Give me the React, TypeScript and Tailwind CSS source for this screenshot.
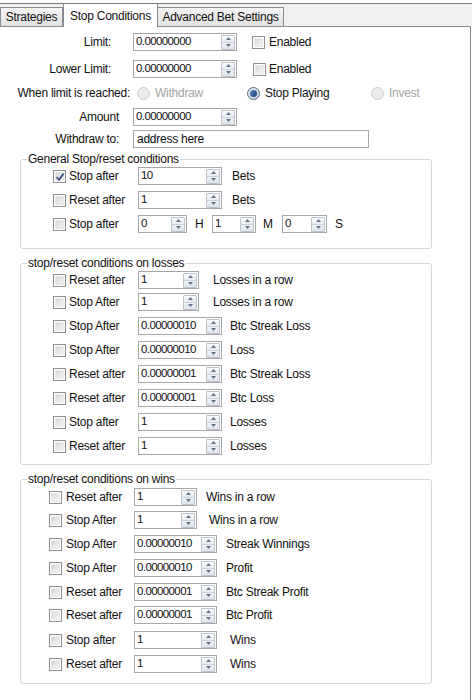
import React from "react";

const Spin = () => (
  <div className="flex flex-col w-[14px] h-[15px] border border-[#bcc3cb] rounded-[1px] ml-auto">
    <div className="flex-1 flex items-center justify-center bg-linear-to-b from-[#fbfcfd] to-[#e6ebf0] border-b border-[#cbd2d9]">
      <svg width="5" height="3" viewBox="0 0 5 3">
        <path d="M2.5 0 L5 3 L0 3 Z" fill="#63738b" />
      </svg>
    </div>
    <div className="flex-1 flex items-center justify-center bg-linear-to-b from-[#eef1f5] to-[#dfe5eb]">
      <svg width="5" height="3" viewBox="0 0 5 3">
        <path d="M0 0 L5 0 L2.5 3 Z" fill="#63738b" />
      </svg>
    </div>
  </div>
);

const NumBox: React.FC<{ value: string; className?: string }> = ({ value, className }) => (
  <div className={`flex items-center h-[18px] border border-[#a7a7a7] bg-white pl-[2px] pr-[1px] ${className ?? ""}`}>
    <span className="leading-none text-[11.5px] tracking-[-0.6px]">{value}</span>
    <Spin />
  </div>
);

const Check: React.FC<{ checked?: boolean; className?: string }> = ({ checked, className }) => (
  <div className={`relative w-[13px] h-[13px] shrink-0 border border-[#8e8f8f] bg-white p-[1px] ${className ?? ""}`}>
    <div className="w-full h-full bg-linear-to-br from-[#d8d8d8] to-[#f6f6f6] border border-[#e8e8e8]" />
    {checked && (
      <svg className="absolute left-[1px] top-[1px]" width="10" height="10" viewBox="0 0 10 10">
        <path d="M1.5 5 L4 7.8 L8.6 1.6" stroke="#3c4f86" strokeWidth="1.8" fill="none" />
      </svg>
    )}
  </div>
);

const Radio: React.FC<{ on?: boolean }> = ({ on }) => (
  <div
    className={`w-[13px] h-[13px] shrink-0 rounded-full border flex items-center justify-center ${
      on ? "border-[#5a6a83] bg-linear-to-br from-[#e9eef5] to-[#c7d2e0]" : "border-[#cccccc] bg-[#ececec]"
    }`}
  >
    {on && <div className="w-[7px] h-[7px] rounded-full bg-linear-to-br from-[#5d8bc9] to-[#1a3d73]" />}
  </div>
);

const Line: React.FC<{ className?: string; children: React.ReactNode }> = ({ className, children }) => (
  <div className={`flex items-center h-[20px] ${className ?? ""}`}>{children}</div>
);

const Group: React.FC<{ title: string; className?: string; children: React.ReactNode }> = ({
  title,
  className,
  children,
}) => (
  <fieldset className={`ml-[20px] w-[412px] border border-[#d3d9de] rounded-[3px] ${className ?? ""}`}>
    <legend className="ml-[6px] px-[1px] leading-[14px]">{title}</legend>
    {children}
  </fieldset>
);

export default function App() {
  return (
    <div className="w-[472px] h-[700px] bg-white text-[#111] text-[12px] tracking-[-0.25px] font-['Liberation_Sans',Arial,sans-serif] leading-[14px]">
      {/* tab strip */}
      <div className="pt-[3px]">
        <div className="flex items-end h-[23px] bg-[#f0f0f0] border-t border-[#7b7b7b]">
          <div className="h-[19px] w-[63px] flex items-center justify-center border border-b-0 border-[#898c95] bg-linear-to-b from-[#f4f4f4] to-[#e2e2e2]">
            Strategies
          </div>
          <div className="h-[23px] w-[95px] flex items-center justify-center border border-b-0 border-t-0 border-[#898c95] bg-white -mb-px relative">
            Stop Conditions
          </div>
          <div className="h-[19px] w-[126px] flex items-center justify-center border border-b-0 border-l-0 border-[#898c95] bg-linear-to-b from-[#f4f4f4] to-[#e2e2e2]">
            Advanced Bet Settings
          </div>
        </div>
      </div>

      {/* tab page */}
      <div className="w-[471px] h-[674px] border-t border-r border-[#898c95]">
        <Line className="mt-[5px]">
          <span className="w-[111px] text-right">Limit:</span>
          <NumBox className="ml-[22px] w-[104px]" value="0.00000000" />
          <Check className="ml-[15px]" />
          <span className="ml-[4px]">Enabled</span>
        </Line>
        <Line className="mt-[7px]">
          <span className="w-[111px] text-right">Lower Limit:</span>
          <NumBox className="ml-[22px] w-[104px]" value="0.00000000" />
          <Check className="ml-[16px]" />
          <span className="ml-[3px]">Enabled</span>
        </Line>
        <Line className="mt-[4px]">
          <span className="w-[130px] text-right">When limit is reached:</span>
          <div className="ml-[7px] w-[110px] flex items-center gap-[5px] text-[#a3a3a3]">
            <Radio />
            <span>Withdraw</span>
          </div>
          <div className="w-[124px] flex items-center gap-[5px]">
            <Radio on />
            <span>Stop Playing</span>
          </div>
          <div className="flex items-center gap-[5px] text-[#a3a3a3]">
            <Radio />
            <span>Invest</span>
          </div>
        </Line>
        <Line className="mt-[4px]">
          <span className="w-[119px] text-right">Amount</span>
          <NumBox className="ml-[14px] w-[104px]" value="0.00000000" />
        </Line>
        <Line className="mt-[2px]">
          <span className="w-[119px] text-right">Withdraw to:</span>
          <div className="ml-[14px] w-[236px] h-[18px] flex items-center border border-[#a7a7a7] pl-[3px]">
            address here
          </div>
        </Line>

        <Group title="General Stop/reset conditions" className="mt-[3px]">
          <div className="pl-[32px] pb-[14px]">
            <Line>
              <Check checked />
              <span className="ml-[3px] w-[69px]">Stop after</span>
              <NumBox className="w-[84px]" value="10" />
              <span className="ml-[10px]">Bets</span>
            </Line>
            <Line className="mt-[4px]">
              <Check />
              <span className="ml-[3px] w-[69px]">Reset after</span>
              <NumBox className="w-[84px]" value="1" />
              <span className="ml-[10px]">Bets</span>
            </Line>
            <Line className="mt-[4px]">
              <Check />
              <span className="ml-[3px] w-[69px]">Stop after</span>
              <NumBox className="w-[49px]" value="0" />
              <span className="ml-[8px] w-[9px]">H</span>
              <NumBox className="ml-[8px] w-[44px]" value="1" />
              <span className="ml-[7px] w-[12px]">M</span>
              <NumBox className="ml-[7px] w-[45px]" value="0" />
              <span className="ml-[8px]">S</span>
            </Line>
          </div>
        </Group>

        <Group title="stop/reset conditions on losses" className="mt-[7px]">
          <div className="pl-[32px] pb-[8px]">
            <Line>
              <Check />
              <span className="ml-[3px] w-[69px]">Reset after</span>
              <NumBox className="w-[61px]" value="1" />
              <span className="ml-[14px]">Losses in a row</span>
            </Line>
            <Line className="mt-[2px]">
              <Check />
              <span className="ml-[3px] w-[69px]">Stop After</span>
              <NumBox className="w-[61px]" value="1" />
              <span className="ml-[14px]">Losses in a row</span>
            </Line>
            <Line className="mt-[4px]">
              <Check />
              <span className="ml-[3px] w-[69px]">Stop After</span>
              <NumBox className="w-[84px]" value="0.00000010" />
              <span className="ml-[8px]">Btc Streak Loss</span>
            </Line>
            <Line className="mt-[4px]">
              <Check />
              <span className="ml-[3px] w-[69px]">Stop After</span>
              <NumBox className="w-[84px]" value="0.00000010" />
              <span className="ml-[8px]">Loss</span>
            </Line>
            <Line className="mt-[4px]">
              <Check />
              <span className="ml-[3px] w-[69px]">Reset after</span>
              <NumBox className="w-[84px]" value="0.00000001" />
              <span className="ml-[8px]">Btc Streak Loss</span>
            </Line>
            <Line className="mt-[4px]">
              <Check />
              <span className="ml-[3px] w-[69px]">Reset after</span>
              <NumBox className="w-[84px]" value="0.00000001" />
              <span className="ml-[8px]">Btc Loss</span>
            </Line>
            <Line className="mt-[4px]">
              <Check />
              <span className="ml-[3px] w-[69px]">Stop after</span>
              <NumBox className="w-[84px]" value="1" />
              <span className="ml-[8px]">Losses</span>
            </Line>
            <Line className="mt-[4px]">
              <Check />
              <span className="ml-[3px] w-[69px]">Reset after</span>
              <NumBox className="w-[84px]" value="1" />
              <span className="ml-[8px]">Losses</span>
            </Line>
          </div>
        </Group>

        <Group title="stop/reset conditions on wins" className="mt-[7px]">
          <div className="pl-[28px] pb-[9px]">
            <Line className="mt-[1px]">
              <Check />
              <span className="ml-[4px] w-[68px]">Reset after</span>
              <NumBox className="w-[63px]" value="1" />
              <span className="ml-[9px]">Wins in a row</span>
            </Line>
            <Line className="mt-[3px]">
              <Check />
              <span className="ml-[4px] w-[68px]">Stop After</span>
              <NumBox className="w-[63px]" value="1" />
              <span className="ml-[12px]">Wins in a row</span>
            </Line>
            <Line className="mt-[4px]">
              <Check />
              <span className="ml-[4px] w-[68px]">Stop After</span>
              <NumBox className="w-[83px]" value="0.00000010" />
              <span className="ml-[9px]">Streak Winnings</span>
            </Line>
            <Line className="mt-[4px]">
              <Check />
              <span className="ml-[4px] w-[68px]">Stop After</span>
              <NumBox className="w-[83px]" value="0.00000010" />
              <span className="ml-[9px]">Profit</span>
            </Line>
            <Line className="mt-[4px]">
              <Check />
              <span className="ml-[4px] w-[68px]">Reset after</span>
              <NumBox className="w-[83px]" value="0.00000001" />
              <span className="ml-[9px]">Btc Streak Profit</span>
            </Line>
            <Line className="mt-[3px]">
              <Check />
              <span className="ml-[4px] w-[68px]">Reset after</span>
              <NumBox className="w-[83px]" value="0.00000001" />
              <span className="ml-[9px]">Btc Profit</span>
            </Line>
            <Line className="mt-[5px]">
              <Check />
              <span className="ml-[4px] w-[68px]">Stop after</span>
              <NumBox className="w-[83px]" value="1" />
              <span className="ml-[13px]">Wins</span>
            </Line>
            <Line className="mt-[4px]">
              <Check />
              <span className="ml-[4px] w-[68px]">Reset after</span>
              <NumBox className="w-[83px]" value="1" />
              <span className="ml-[13px]">Wins</span>
            </Line>
          </div>
        </Group>
      </div>
    </div>
  );
}
